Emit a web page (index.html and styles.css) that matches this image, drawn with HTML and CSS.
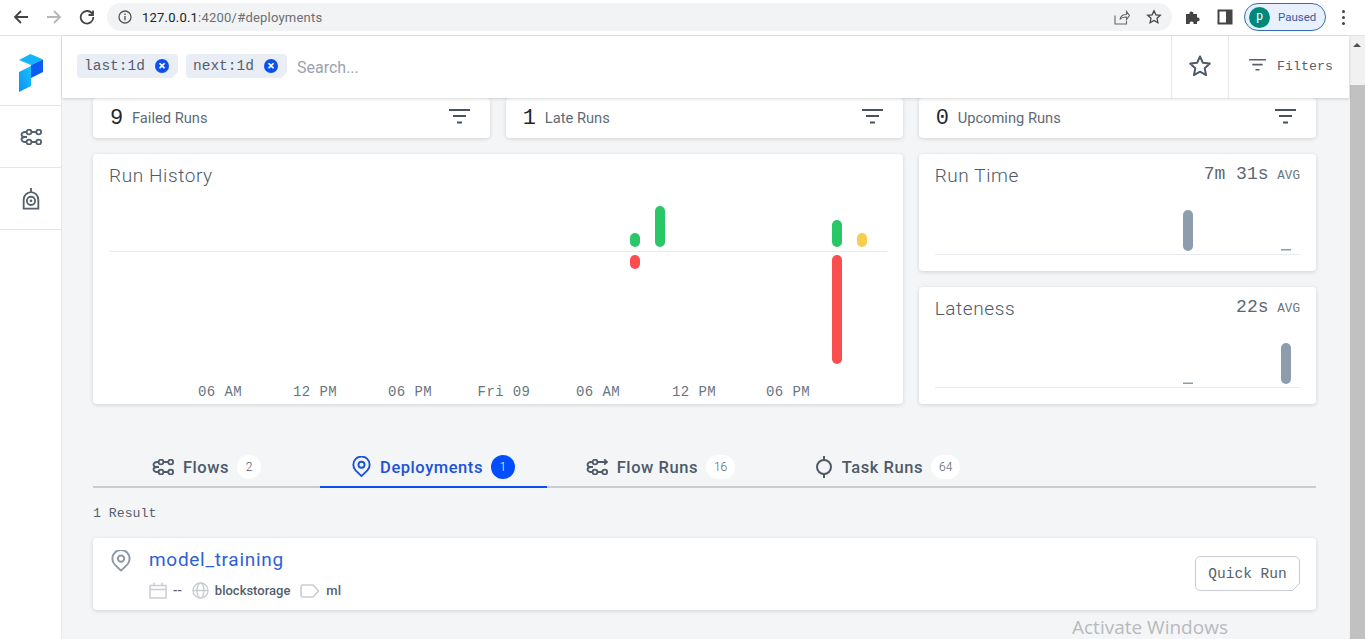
FILE: index.html
```html
<!DOCTYPE html>
<html lang="en">
<head>
    <meta charset="UTF-8">
    <meta name="viewport" content="width=device-width, initial-scale=1.0">
    <title>Prefect Orion</title>
    <link rel="stylesheet" href="styles.css">
</head>
<body>

<svg class="icon-defs" width="0" height="0">
    <symbol id="flow" viewBox="0 0 22 16">
        <g fill="none" stroke="currentColor" stroke-width="1.800">
            <circle cx="9" cy="3" r="2.400"/>
            <circle cx="18.700" cy="3" r="2.400"/>
            <circle cx="9" cy="13" r="2.400"/>
            <circle cx="18.700" cy="13" r="2.400"/>
            <path d="M11.400 3h4.900M11.400 13h4.900M6.600 3H5a3.500 2.500 0 0 0 0 5 3.500 2.500 0 0 0 0 5h1.600M5 8h2"/>
        </g>
    </symbol>
    <symbol id="flow-run" viewBox="0 0 22 16">
        <g fill="none" stroke="currentColor" stroke-width="1.800">
            <circle cx="9" cy="3" r="2.400"/>
            <circle cx="9" cy="13" r="2.400"/>
            <circle cx="18.700" cy="13" r="2.400"/>
            <path d="M11.400 3h9.600M18.200.3 21 3l-2.800 2.700M11.400 13h4.900M6.600 3H5a3.500 2.500 0 0 0 0 5 3.500 2.500 0 0 0 0 5h1.600M5 8h2"/>
        </g>
    </symbol>
    <symbol id="pin" viewBox="0 0 20 22">
        <g fill="none" stroke="currentColor" stroke-width="2">
            <path d="M10 20.600 3.800 14.600a8.600 8.600 0 1 1 12.400 0z" stroke-linejoin="round"/>
            <circle cx="10" cy="8.600" r="3.200"/>
        </g>
    </symbol>
    <symbol id="filter" viewBox="0 0 21 15">
        <path d="M0 0h21v2H0zM4 6h13v2H4zM8 12.500h5v2H8z" fill="currentColor"/>
    </symbol>
</svg>

<!-- Browser toolbar -->
<div class="browser-bar">
    <div class="nav-buttons">
        <svg class="nav-icon" viewBox="0 0 16 16"><path d="M15 8H2M8 2 2 8l6 6" fill="none" stroke="#444" stroke-width="1.800"/></svg>
        <svg class="nav-icon" viewBox="0 0 16 16"><path d="M1 8h13M8 2l6 6-6 6" fill="none" stroke="#b4b6b8" stroke-width="1.800"/></svg>
        <svg class="nav-icon" viewBox="0 0 16 16"><path d="M13.500 5.200A6.300 6.300 0 1 0 14.300 8M14 1.500v4.500H9.500" fill="none" stroke="#444" stroke-width="1.800"/></svg>
    </div>
    <div class="omnibox">
        <svg class="info-icon" viewBox="0 0 14 14"><circle cx="7" cy="7" r="6" fill="none" stroke="#555" stroke-width="1.300"/><path d="M6.300 6h1.400v4.200H6.300zM6.300 3.500h1.400v1.400H6.300z" fill="#555"/></svg>
        <span class="url"><span class="url-host">127.0.0.1</span>:4200/#deployments</span>
        <svg class="omni-icon share-icon" viewBox="0 0 16 16"><path d="M1 6.500V15h11.500v-3M6 10.500c.5-3.500 3-5 6.500-5V2.500L15.500 6.500l-3 4V8C9.500 8 7.500 8.500 6 10.500z" fill="none" stroke="#666" stroke-width="1.100"/></svg>
        <svg class="omni-icon" viewBox="0 0 16 16"><path d="m8 1.800 1.900 4 4.400.5-3.300 3 .9 4.400L8 11.500l-3.900 2.200.9-4.400-3.300-3 4.400-.5z" fill="none" stroke="#444" stroke-width="1.300"/></svg>
    </div>
    <svg class="ext-icon" viewBox="0 0 16 16"><path d="M1 5h3.500a2 2 0 1 1 3.800 0H12v3.500a2 2 0 1 1 0 3.800V15H8.500a2 2 0 1 0-3.800 0H1z" fill="#444"/></svg>
    <svg class="ext-icon" viewBox="0 0 16 16"><path d="M1.500 1.500h13v13h-13z" fill="none" stroke="#444" stroke-width="2"/><path d="M9 1.500h5.500v13H9z" fill="#444"/></svg>
    <div class="profile-pill">
        <span class="avatar">p</span>
        <span class="paused">Paused</span>
    </div>
    <div class="kebab"><i></i><i></i><i></i></div>
</div>

<div class="app">
    <!-- Sidebar -->
    <nav class="sidebar">
        <div class="side-item side-logo">
            <svg width="26" height="40" viewBox="0 0 26 40">
                <defs>
                    <linearGradient id="logoLeft" x1="0" y1="1" x2="1" y2="0">
                        <stop offset="0" stop-color="#0a8ff5"/>
                        <stop offset="1" stop-color="#1cc4ff"/>
                    </linearGradient>
                </defs>
                <path d="M1 6 12.500 0 25 5.500 13 11z" fill="#12b5fb"/>
                <path d="M13 11 25 5.500V18L13 24z" fill="#0b5cf0"/>
                <path d="M1 18 13 12v20L1 38z" fill="url(#logoLeft)"/>
            </svg>
        </div>
        <div class="side-item">
            <svg class="side-icon" width="22" height="16"><use href="#flow"/></svg>
        </div>
        <div class="side-item">
            <svg class="side-icon" width="18" height="22" viewBox="0 0 19 24">
                <g fill="none" stroke="currentColor" stroke-width="2">
                    <path d="M9.500 0v4M1.500 22.500V13a8 8.500 0 0 1 16 0v9.500z"/>
                    <circle cx="9.500" cy="14" r="4.500"/>
                </g>
                <circle cx="9.500" cy="14" r="1.500" fill="currentColor"/>
            </svg>
        </div>
    </nav>

    <div class="main">
        <!-- Filter bar -->
        <div class="filter-bar">
            <div class="filter-search">
                <span class="tag">last:1d <span class="tag-x">&#215;</span></span>
                <span class="tag">next:1d <span class="tag-x">&#215;</span></span>
                <span class="search-text">Search...</span>
            </div>
            <div class="filter-star">
                <svg width="24" height="24" viewBox="0 0 24 24"><path d="m12 2.500 2.900 6.300 6.900.8-5.100 4.700 1.400 6.800-6.100-3.400-6.100 3.400 1.400-6.800-5.100-4.700 6.900-.8z" fill="none" stroke="#4e5a68" stroke-width="2" stroke-linejoin="round"/></svg>
            </div>
            <div class="filter-toggle">
                <svg class="filter-thin" width="19" height="12"><use href="#filter"/></svg>
                <span>Filters</span>
            </div>
        </div>

        <div class="content">
            <div class="dash-grid">
                <div class="card stat-card">
                    <span class="stat-num">9</span><span class="stat-label">Failed Runs</span>
                    <svg class="stat-filter" width="21" height="15"><use href="#filter"/></svg>
                </div>
                <div class="card stat-card">
                    <span class="stat-num">1</span><span class="stat-label">Late Runs</span>
                    <svg class="stat-filter" width="21" height="15"><use href="#filter"/></svg>
                </div>
                <div class="card stat-card">
                    <span class="stat-num">0</span><span class="stat-label">Upcoming Runs</span>
                    <svg class="stat-filter" width="21" height="15"><use href="#filter"/></svg>
                </div>

                <div class="card history-card">
                    <div class="card-head"><span class="card-title">Run History</span></div>
                    <svg class="chart" width="810" height="210" viewBox="93 194 810 210">
                        <path class="chart-base" d="M109 251.500h778"/>
                        <rect class="bar-green" x="630" y="233" width="10" height="14" rx="5"/>
                        <rect class="bar-green" x="655" y="206" width="10" height="41" rx="5"/>
                        <rect class="bar-green" x="832" y="220" width="10" height="27" rx="5"/>
                        <rect class="bar-yellow" x="857" y="233" width="10" height="14" rx="5"/>
                        <rect class="bar-red" x="630" y="255" width="10" height="14" rx="5"/>
                        <rect class="bar-red" x="832" y="255" width="10" height="109" rx="5"/>
                        <g class="axis-text">
                            <text x="220" y="396">06 AM</text>
                            <text x="315" y="396">12 PM</text>
                            <text x="410" y="396">06 PM</text>
                            <text x="504" y="396">Fri 09</text>
                            <text x="598" y="396">06 AM</text>
                            <text x="694" y="396">12 PM</text>
                            <text x="788" y="396">06 PM</text>
                        </g>
                    </svg>
                </div>

                <div class="card side-card">
                    <div class="card-head">
                        <span class="card-title">Run Time</span>
                        <span class="avg-value">7m 31s <small>AVG</small></span>
                    </div>
                    <svg class="chart" width="397" height="77" viewBox="919 194 397 77">
                        <path class="chart-base" d="M935 254.500h365"/>
                        <rect class="bar-gray" x="1183" y="210" width="10" height="41" rx="5"/>
                        <rect class="bar-gray" x="1281" y="249" width="10" height="1.500"/>
                    </svg>
                </div>

                <div class="card side-card">
                    <div class="card-head">
                        <span class="card-title">Lateness</span>
                        <span class="avg-value">22s <small>AVG</small></span>
                    </div>
                    <svg class="chart" width="397" height="77" viewBox="919 327 397 77">
                        <path class="chart-base" d="M935 387.500h365"/>
                        <rect class="bar-gray" x="1281" y="343" width="10" height="41" rx="5"/>
                        <rect class="bar-gray" x="1183" y="382.500" width="10" height="1.500"/>
                    </svg>
                </div>
            </div>

            <!-- Tabs -->
            <div class="tabs">
                <div class="tab">
                    <svg width="22" height="16"><use href="#flow"/></svg>
                    <span class="tab-name">Flows</span><span class="tab-count">2</span>
                </div>
                <div class="tab tab-active">
                    <svg width="19" height="22"><use href="#pin"/></svg>
                    <span class="tab-name">Deployments</span><span class="tab-count">1</span>
                </div>
                <div class="tab">
                    <svg width="22" height="16"><use href="#flow-run"/></svg>
                    <span class="tab-name">Flow Runs</span><span class="tab-count">16</span>
                </div>
                <div class="tab">
                    <svg width="18" height="22" viewBox="0 0 18 22"><g fill="none" stroke="currentColor" stroke-width="2"><circle cx="9" cy="11" r="7"/><path d="M9 0v4M9 18v4"/></g></svg>
                    <span class="tab-name">Task Runs</span><span class="tab-count">64</span>
                </div>
            </div>

            <div class="result-count">1 Result</div>

            <div class="card deploy-card">
                <svg class="deploy-pin" width="20" height="22"><use href="#pin"/></svg>
                <div class="deploy-info">
                    <a class="deploy-name">model_training</a>
                    <div class="deploy-meta">
                        <svg width="18" height="17" viewBox="0 0 18 17"><path d="M1 3.500h16v12.500H1zM1 7.500h16M5 .5v4M13 .5v4" fill="none" stroke="#c9cdd2" stroke-width="1.500"/></svg>
                        <span class="meta-text meta-dash">--</span>
                        <svg width="17" height="17" viewBox="0 0 17 17"><g fill="none" stroke="#c9cdd2" stroke-width="1.400"><circle cx="8.500" cy="8.500" r="7.500"/><ellipse cx="8.500" cy="8.500" rx="3.500" ry="7.500"/><path d="M1 8.500h15"/></g></svg>
                        <span class="meta-text meta-store">blockstorage</span>
                        <svg width="20" height="14" viewBox="0 0 20 14"><path d="M2.500 1h10.500l5.500 6-5.500 6H2.500A1.500 1.500 0 0 1 1 11.500v-9A1.500 1.500 0 0 1 2.500 1z" fill="none" stroke="#c9cdd2" stroke-width="1.600"/></svg>
                        <span class="meta-text">ml</span>
                    </div>
                </div>
                <button class="quick-run">Quick Run</button>
            </div>
        </div>
    </div>

    <!-- Scrollbar -->
    <div class="scrollbar">
        <div class="scroll-arrow"></div>
        <div class="scroll-thumb"></div>
    </div>
</div>

<p class="activate">Activate Windows</p>

</body>
</html>
```

FILE: styles.css
```css
/* Global Styling */
* {
    margin: 0;
    padding: 0;
    box-sizing: border-box;
}

body {
    display: flex;
    flex-direction: column;
    height: 100vh;
    overflow: hidden;
    font-family: Roboto, sans-serif;
    background-color: #f3f5f7;
    color: #4e5a68;
}

.icon-defs {
    position: absolute;
}

/* Browser Toolbar */
.browser-bar {
    display: flex;
    align-items: center;
    flex: 0 0 36px;
    background: #fff;
    border-bottom: 1px solid #dfe1e3;
    padding-bottom: 1px;
}

.nav-buttons {
    display: flex;
    gap: 17px;
    padding-left: 13px;
    width: 107px;
}

.nav-icon {
    width: 16px;
    height: 16px;
}

.omnibox {
    display: flex;
    align-items: center;
    width: 1065px;
    height: 28px;
    margin-right: 13px;
    padding: 0 10px 0 11px;
    background: #f1f3f4;
    border-radius: 14px;
}

.info-icon {
    width: 14px;
    height: 14px;
    margin-right: 10px;
}

.url {
    flex: 1;
    font-size: 13px;
    letter-spacing: 0.220px;
    color: #6b6f73;
}

.url-host {
    color: #202124;
}

.omni-icon {
    width: 16px;
    height: 16px;
}

.share-icon {
    margin-right: 16px;
}

.ext-icon {
    width: 16px;
    height: 16px;
    margin-right: 16px;
}

.profile-pill {
    display: flex;
    align-items: center;
    width: 82px;
    height: 28px;
    margin-left: -5px;
    padding-left: 4px;
    border: 1px solid #2f6fb5;
    border-radius: 14px;
    background: #e8f0fe;
}

.avatar {
    width: 21px;
    height: 21px;
    border-radius: 50%;
    background: #00897b;
    color: #fff;
    font-size: 12px;
    line-height: 19px;
    text-align: center;
}

.paused {
    margin-left: 8px;
    font-size: 11.500px;
    color: #3a5a9a;
}

.kebab {
    display: flex;
    flex-direction: column;
    gap: 3px;
    margin-left: 16px;
}

.kebab i {
    width: 3px;
    height: 3px;
    border-radius: 50%;
    background: #444;
}

/* App Layout */
.app {
    display: flex;
    flex: 1;
    min-height: 0;
}

.sidebar {
    flex: 0 0 62px;
    background: #fff;
    border-right: 1px solid #e6e8eb;
}

.side-item {
    display: flex;
    align-items: center;
    justify-content: center;
    height: 62px;
    border-bottom: 1px solid #e3e5e8;
}

.side-logo {
    height: 70px;
    padding-top: 6px;
}

.side-icon {
    color: #55606c;
}

.main {
    display: flex;
    flex-direction: column;
    flex: 1;
    min-width: 0;
}

/* Filter Bar */
.filter-bar {
    position: relative;
    z-index: 2;
    display: flex;
    flex: 0 0 62px;
    background: #fff;
    box-shadow: 0 1px 3px rgba(0, 0, 0, 0.16);
}

.filter-search {
    display: flex;
    align-items: center;
    flex: 1;
    gap: 8px;
    padding: 0 0 2px 15px;
}

.tag {
    display: flex;
    align-items: center;
    justify-content: space-between;
    width: 101px;
    height: 24px;
    padding: 0 9px 0 7px;
    background: #e9edf5;
    border-radius: 4px;
    font-family: "Liberation Mono", monospace;
    font-size: 14.500px;
    color: #56606c;
    clip-path: polygon(0 0, 100% 0, 100% calc(100% - 6px), calc(100% - 6px) 100%, 0 100%);
}

.tag-x {
    width: 14px;
    height: 14px;
    border-radius: 50%;
    background: #0b4ff0;
    color: #fff;
    font-family: Roboto, sans-serif;
    font-size: 13px;
    font-weight: 700;
    line-height: 14px;
    text-align: center;
}

.search-text {
    margin: 3px 0 0 2px;
    font-size: 16px;
    color: #9aa3ad;
}

.filter-star {
    display: flex;
    align-items: center;
    justify-content: center;
    width: 57px;
    border-left: 1px solid #e6e8eb;
    padding-bottom: 2px;
}

.filter-toggle {
    display: flex;
    align-items: center;
    gap: 10px;
    width: 121px;
    padding: 0 0 1px 19px;
    border-left: 1px solid #e6e8eb;
    font-family: "Liberation Mono", monospace;
    font-size: 13.200px;
    letter-spacing: 0.100px;
    color: #56606c;
}

.filter-thin {
    margin-bottom: 3px;
    color: #56606c;
}

/* Content */
.content {
    flex: 1;
    min-height: 0;
    padding: 0 33px 0 31px;
    overflow: hidden;
}

.dash-grid {
    display: grid;
    grid-template-columns: repeat(3, 1fr);
    grid-template-rows: 40px 117px 117px;
    gap: 16px 15.500px;
}

.card {
    background: #fff;
    border-radius: 4px;
    box-shadow: 0 1px 4px rgba(0, 0, 0, 0.14);
}

.stat-card {
    display: flex;
    align-items: center;
    padding: 0 20px 0 17px;
}

.stat-num {
    width: 22px;
    font-family: "Liberation Mono", monospace;
    font-size: 22px;
    color: #1f2833;
}

.stat-label {
    flex: 1;
    font-size: 14.700px;
    color: #5f6a76;
}

.stat-filter {
    margin-bottom: 3px;
    color: #48535f;
}

.history-card {
    grid-column: span 2;
    grid-row: span 2;
}

.card-head {
    display: flex;
    justify-content: space-between;
    height: 40px;
    padding: 10px 16px 0;
}

.card-title {
    font-size: 19px;
    font-weight: 300;
    letter-spacing: 0.600px;
    color: #4e5a68;
}

.avg-value {
    font-family: "Liberation Mono", monospace;
    font-size: 18px;
    color: #5a6673;
}

.avg-value small {
    margin-left: -2px;
    font-size: 12.600px;
    color: #6b7682;
}

.chart {
    display: block;
}

.chart-base {
    fill: none;
    stroke: #e7eaee;
    stroke-width: 1;
}

.bar-green {
    fill: #2ac769;
}

.bar-red {
    fill: #fb4e4e;
}

.bar-yellow {
    fill: #f6cd4d;
}

.bar-gray {
    fill: #8d9dad;
}

.axis-text {
    font-family: "Liberation Mono", monospace;
    font-size: 14px;
    letter-spacing: 0.400px;
    fill: #6a7581;
    text-anchor: middle;
}

/* Tabs */
.tabs {
    display: flex;
    margin-top: 42px;
    height: 42px;
    border-bottom: 2px solid #c9cdd1;
}

.tab {
    display: flex;
    align-items: center;
    justify-content: center;
    gap: 9px;
    width: 227px;
    height: 42px;
    color: #4e5a68;
}

.tab-name {
    font-size: 16.500px;
    font-weight: 500;
    letter-spacing: 0.550px;
}

.tab-count {
    min-width: 24px;
    height: 24px;
    margin-left: -1px;
    padding: 0 8px;
    border-radius: 12px;
    background: #fff;
    font-size: 12px;
    font-weight: 300;
    line-height: 24px;
    text-align: center;
}

.tab-active {
    color: #1c52d8;
    box-shadow: inset 0 -2px 0 #0b4ff0;
}

.tab-active .tab-count {
    background: #024dfd;
    color: #fff;
}

.result-count {
    margin-top: 18px;
    font-family: "Liberation Mono", monospace;
    font-size: 13.200px;
    color: #56606c;
}

/* Deployment Card */
.deploy-card {
    display: flex;
    align-items: flex-start;
    height: 72px;
    margin-top: 17px;
    padding: 12px 16px 0 18px;
}

.deploy-pin {
    color: #8d9aa8;
}

.deploy-info {
    flex: 1;
    margin-left: 18px;
}

.deploy-name {
    display: block;
    font-size: 19px;
    line-height: 20px;
    letter-spacing: 0.700px;
    color: #2d5fd8;
}

.deploy-meta {
    display: flex;
    align-items: center;
    gap: 6px;
    margin-top: 12px;
}

.meta-text {
    font-size: 13px;
    font-weight: 500;
    color: #56606c;
}

.meta-dash {
    margin-right: 4px;
}

.meta-store {
    margin-right: 4px;
}

.quick-run {
    position: relative;
    width: 105px;
    height: 35px;
    margin-top: 6px;
    background: #fff;
    border: 1px solid #c9cdd2;
    border-radius: 5px;
    font-family: "Liberation Mono", monospace;
    font-size: 14.500px;
    color: #56606c;
}

.quick-run::after {
    content: "";
    position: absolute;
    right: -1px;
    bottom: -1px;
    width: 8px;
    height: 8px;
    background: linear-gradient(to bottom right, transparent 45%, #c9cdd2 45%, #c9cdd2 55%, #fff 55%);
}

/* Scrollbar */
.scrollbar {
    flex: 0 0 16px;
    overflow: hidden;
    background: #f1f1f1;
}

.scroll-arrow {
    width: 0;
    height: 0;
    margin: 7px auto 0;
    border: 4px solid transparent;
    border-top: 0;
    border-bottom: 4px solid #505050;
}

.scroll-thumb {
    height: 100%;
    margin: 38px 0 0 1px;
    background: #c1c1c1;
}

/* Windows Watermark */
.activate {
    position: absolute;
    left: 1072px;
    top: 614px;
    font-family: "Open Sans", sans-serif;
    font-size: 19px;
    color: #b7babd;
}
```
